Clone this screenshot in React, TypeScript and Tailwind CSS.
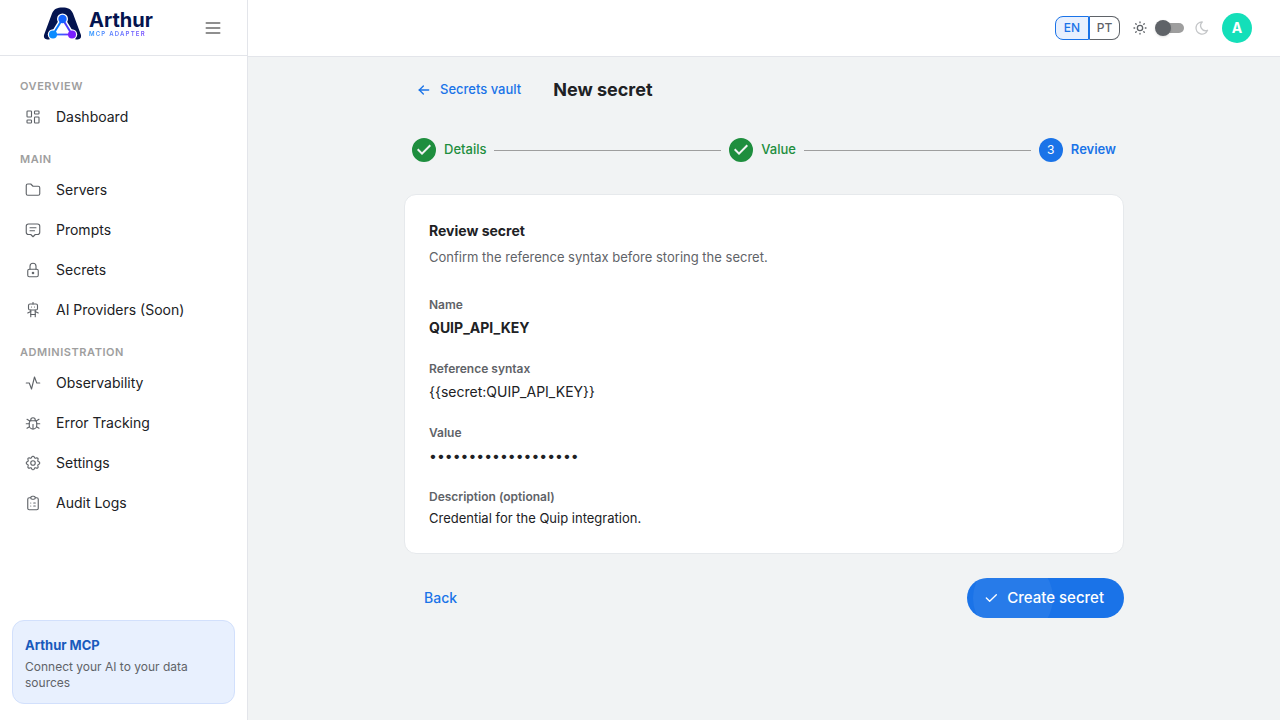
import { useState } from "react";
import type { IconType } from "react-icons";
import {
  TbActivity,
  TbArrowLeft,
  TbBug,
  TbCheck,
  TbClipboardList,
  TbFolder,
  TbLayoutDashboard,
  TbLock,
  TbMenu2,
  TbMessage2,
  TbMoon,
  TbRobot,
  TbSettings,
  TbSun,
} from "react-icons/tb";

type NavItem = { label: string; icon: IconType };

const sections: { title: string; items: NavItem[] }[] = [
  { title: "OVERVIEW", items: [{ label: "Dashboard", icon: TbLayoutDashboard }] },
  {
    title: "MAIN",
    items: [
      { label: "Servers", icon: TbFolder },
      { label: "Prompts", icon: TbMessage2 },
      { label: "Secrets", icon: TbLock },
      { label: "AI Providers (Soon)", icon: TbRobot },
    ],
  },
  {
    title: "ADMINISTRATION",
    items: [
      { label: "Observability", icon: TbActivity },
      { label: "Error Tracking", icon: TbBug },
      { label: "Settings", icon: TbSettings },
      { label: "Audit Logs", icon: TbClipboardList },
    ],
  },
];

function Logo() {
  return (
    <a href="#home" className="flex items-center gap-[7px]">
      <svg width="39" height="33" viewBox="0 0 39 33" aria-hidden="true">
        <defs>
          <linearGradient id="edge" x1="0" y1="0" x2="1" y2="0">
            <stop offset="0" stopColor="#0a8bff" />
            <stop offset="1" stopColor="#7a1fff" />
          </linearGradient>
        </defs>
        <path
          d="M4.5 32.5C1.5 32.5 0.3 30.2 1.2 27.6L9 6.5C10.8 2 14.3 0.5 19.5 0.5S28.2 2 30 6.5L37.8 27.6C38.7 30.2 37.5 32.5 34.5 32.5C33 32.5 31.5 32.2 30.5 31.5H8.5C7.5 32.2 6 32.5 4.5 32.5Z"
          fill="#04144f"
        />
        <path d="M19.5 12L10 27.5H29Z" fill="#fff" stroke="#fff" strokeWidth="5" strokeLinejoin="round" />
        <circle cx="19.5" cy="12" r="5.5" fill="#fff" />
        <circle cx="10" cy="27.5" r="5.2" fill="#fff" />
        <circle cx="29" cy="27.5" r="5.2" fill="#fff" />
        <path d="M10 28H29V33H10Z" fill="#fff" />
        <path d="M19.5 12L10 27.5" stroke="#0a78ff" strokeWidth="2" />
        <path d="M19.5 12L29 27.5" stroke="#4a3cff" strokeWidth="2" />
        <path d="M10 26.6H29V28.4H10Z" fill="url(#edge)" />
        <circle cx="19.5" cy="12" r="4.2" fill="#1464ff" />
        <circle cx="10" cy="27.5" r="4" fill="#0a8bff" />
        <circle cx="29" cy="27.5" r="4" fill="#7a1fff" />
      </svg>
      <span className="flex flex-col pt-px">
        <span className="text-[20px] leading-5 font-bold text-[#04144f]">Arthur</span>
        <span className="bg-linear-to-r from-[#1a94ff] to-[#7a3cff] bg-clip-text text-[6px] leading-[8px] font-semibold tracking-[0.2em] text-transparent">
          MCP ADAPTER
        </span>
      </span>
    </a>
  );
}

function Sidebar() {
  return (
    <aside className="flex w-62 shrink-0 flex-col border-r border-[#e3e5ea] bg-white">
      <div className="flex h-14 items-center justify-between border-b border-[#e3e5ea] pr-5 pb-2 pl-[43px]">
        <Logo />
        <button type="button" aria-label="Toggle menu" className="mt-2 p-1 text-[#6b6b6b]">
          <TbMenu2 size={20} strokeWidth={2} />
        </button>
      </div>
      <nav className="flex-1 pt-2">
        {sections.map((section) => (
          <section key={section.title}>
            <h2 className="px-5 pt-[14px] pb-[3px] text-[11px] leading-4 font-semibold tracking-wider text-[#9e9e9e]">
              {section.title}
            </h2>
            <ul>
              {section.items.map(({ label, icon: Icon }) => (
                <li key={label}>
                  <a href={"#" + label} className="flex h-10 items-center gap-[14px] px-6 text-sm text-[#202124]">
                    <Icon size={18} strokeWidth={1.5} className="text-[#5f6368]" />
                    {label}
                  </a>
                </li>
              ))}
            </ul>
          </section>
        ))}
      </nav>
      <div className="m-3 mb-4 rounded-xl border border-[#d2e0fc] bg-[#e8f0fe] px-3 pt-[14px] pb-3">
        <p className="text-[13px] leading-5 font-bold text-[#185abc]">Arthur MCP</p>
        <p className="mt-1 text-xs leading-4 text-[#5f6368]">Connect your AI to your data sources</p>
      </div>
    </aside>
  );
}

function TopBar() {
  const [dark, setDark] = useState(false);
  return (
    <header className="flex h-[57px] shrink-0 items-center justify-end border-b border-[#e3e5ea] bg-white pr-7">
      <div role="group" aria-label="Language" className="flex h-6 text-xs font-medium">
        <button type="button" aria-pressed="true" className="w-[34px] rounded-l-lg border border-[#1a73e8] bg-[#e8f0fe] text-[#1a73e8]">
          EN
        </button>
        <button type="button" aria-pressed="false" className="w-[31px] rounded-r-lg border border-[#5f6368] border-l-[#1a73e8] text-[#5f6368]">
          PT
        </button>
      </div>
      <TbSun size={16} strokeWidth={2} className="ml-3 text-[#5f6368]" />
      <input
        type="checkbox"
        role="switch"
        aria-label="Dark mode"
        checked={dark}
        onChange={() => setDark(!dark)}
        className="ml-2 flex h-[10px] w-[28px] appearance-none items-center rounded-full bg-[#9e9e9e] before:-ml-px before:size-4 before:rounded-full before:bg-[#5f6368] before:shadow checked:before:ml-[13px]"
      />
      <TbMoon size={16} strokeWidth={2} className="ml-[10px] text-[#c4c6c8]" />
      <button type="button" aria-label="Account" className="ml-3 size-[30px] rounded-full bg-[#14dfb9] text-sm font-bold text-white">
        A
      </button>
    </header>
  );
}

function DoneStep({ label }: { label: string }) {
  return (
    <li className="flex items-center gap-2 px-2 text-[#1e8e3e]">
      <svg width="24" height="24" viewBox="0 0 24 24" fill="currentColor" aria-hidden="true">
        <path d="M12 0a12 12 0 1 0 0 24 12 12 0 0 0 0-24zm-2 17l-5-5 1.4-1.4 3.6 3.6 7.6-7.6L19 8l-9 9z" />
      </svg>
      {label}
    </li>
  );
}

const fields = [
  { label: "Name", value: "QUIP_API_KEY", style: "text-sm leading-[26px] font-bold" },
  { label: "Reference syntax", value: "{{secret:QUIP_API_KEY}}", style: "text-sm leading-[26px]" },
  { label: "Value", value: "•".repeat(19), style: "text-sm leading-[26px]" },
  { label: "Description (optional)", value: "Credential for the Quip integration.", style: "text-[13px] leading-[22px]" },
];

export default function App() {
  return (
    <div className="flex min-h-screen bg-[#f1f3f4] font-['Inter','Liberation_Sans',sans-serif] text-[#202124]">
      <Sidebar />
      <div className="flex min-w-0 flex-1 flex-col">
        <TopBar />
        <main className="mx-auto w-full max-w-[720px] pt-5">
          <div className="flex h-[26px] items-center gap-8 pl-3">
            <a href="#vault" className="flex items-center gap-2 text-[13px] font-medium text-[#1a73e8]">
              <TbArrowLeft size={16} />
              Secrets vault
            </a>
            <h1 className="text-lg font-bold">New secret</h1>
          </div>
          <ol className="mt-[35px] flex items-center text-[13px] font-medium">
            <DoneStep label="Details" />
            <li aria-hidden="true" className="h-px flex-1 bg-[#9e9e9e]" />
            <DoneStep label="Value" />
            <li aria-hidden="true" className="h-px flex-1 bg-[#9e9e9e]" />
            <li aria-current="step" className="flex items-center gap-2 px-2 font-semibold text-[#1a73e8]">
              <span className="flex size-6 items-center justify-center rounded-full bg-[#1a73e8] text-xs font-normal text-white">3</span>
              Review
            </li>
          </ol>
          <section className="mt-8 rounded-xl border border-[#e6e9ec] bg-white p-6">
            <h2 className="text-sm leading-6 font-bold">Review secret</h2>
            <p className="mt-1 text-[13px] leading-5 text-[#5f6368]">Confirm the reference syntax before storing the secret.</p>
            <dl className="mt-7 flex flex-col gap-[18px]">
              {fields.map((f) => (
                <div key={f.label}>
                  <dt className="text-xs leading-5 font-semibold text-[#5f6368]">{f.label}</dt>
                  <dd className={f.style}>{f.value}</dd>
                </div>
              ))}
            </dl>
          </section>
          <div className="mt-6 flex items-center justify-between pb-6">
            <button type="button" className="h-10 px-5 text-sm font-medium text-[#1a73e8]">
              Back
            </button>
            <button
              type="button"
              className="relative flex h-10 items-center gap-2 overflow-hidden rounded-full bg-[#1a73e8] pr-5 pl-4 text-[15px] font-medium text-white"
            >
              <span className="absolute top-1/2 left-[6px] size-20 -translate-y-1/2 rounded-full bg-white/6" />
              <TbCheck size={16} strokeWidth={2} />
              Create secret
            </button>
          </div>
        </main>
      </div>
    </div>
  );
}
